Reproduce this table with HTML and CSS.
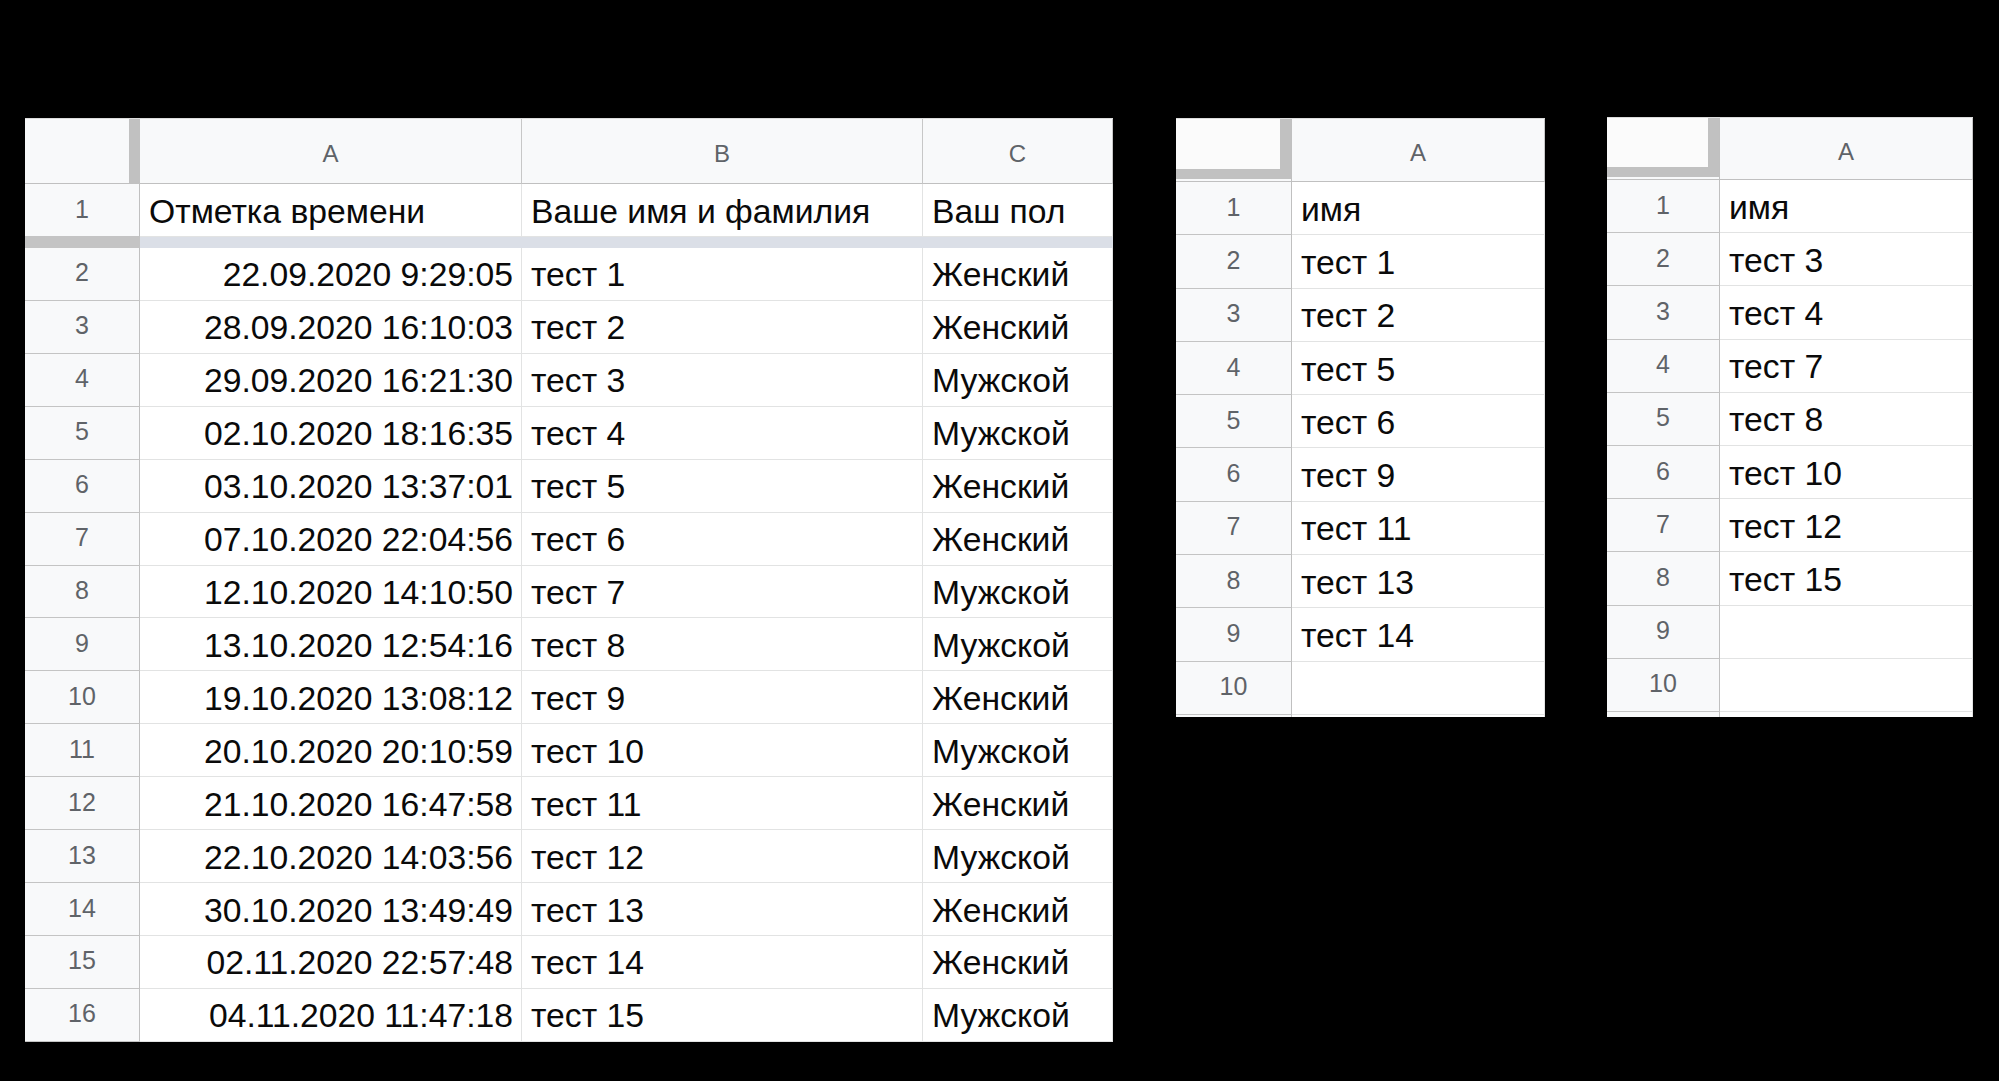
FILE: index.html
```html
<!DOCTYPE html>
<html lang="ru">
<head>
<meta charset="utf-8">
<title>Таблицы</title>
<link rel="stylesheet" href="styles.css">
</head>
<body>
<div class="page">
  <div class="sheet main">
    <div class="corner corner-main"></div>
    <div class="colh">A</div>
    <div class="colh">B</div>
    <div class="colh">C</div>

    <div class="rowh">1</div>
    <div class="cell">Отметка времени</div>
    <div class="cell">Ваше имя и фамилия</div>
    <div class="cell">Ваш пол</div>

    <div class="band-h"></div>
    <div class="band"></div>

    <div class="rowh">2</div><div class="cell num">22.09.2020 9:29:05</div><div class="cell">тест 1</div><div class="cell">Женский</div>
    <div class="rowh">3</div><div class="cell num">28.09.2020 16:10:03</div><div class="cell">тест 2</div><div class="cell">Женский</div>
    <div class="rowh">4</div><div class="cell num">29.09.2020 16:21:30</div><div class="cell">тест 3</div><div class="cell">Мужской</div>
    <div class="rowh">5</div><div class="cell num">02.10.2020 18:16:35</div><div class="cell">тест 4</div><div class="cell">Мужской</div>
    <div class="rowh">6</div><div class="cell num">03.10.2020 13:37:01</div><div class="cell">тест 5</div><div class="cell">Женский</div>
    <div class="rowh">7</div><div class="cell num">07.10.2020 22:04:56</div><div class="cell">тест 6</div><div class="cell">Женский</div>
    <div class="rowh">8</div><div class="cell num">12.10.2020 14:10:50</div><div class="cell">тест 7</div><div class="cell">Мужской</div>
    <div class="rowh">9</div><div class="cell num">13.10.2020 12:54:16</div><div class="cell">тест 8</div><div class="cell">Мужской</div>
    <div class="rowh">10</div><div class="cell num">19.10.2020 13:08:12</div><div class="cell">тест 9</div><div class="cell">Женский</div>
    <div class="rowh">11</div><div class="cell num">20.10.2020 20:10:59</div><div class="cell">тест 10</div><div class="cell">Мужской</div>
    <div class="rowh">12</div><div class="cell num">21.10.2020 16:47:58</div><div class="cell">тест 11</div><div class="cell">Женский</div>
    <div class="rowh">13</div><div class="cell num">22.10.2020 14:03:56</div><div class="cell">тест 12</div><div class="cell">Мужской</div>
    <div class="rowh">14</div><div class="cell num">30.10.2020 13:49:49</div><div class="cell">тест 13</div><div class="cell">Женский</div>
    <div class="rowh">15</div><div class="cell num">02.11.2020 22:57:48</div><div class="cell">тест 14</div><div class="cell">Женский</div>
    <div class="rowh">16</div><div class="cell num">04.11.2020 11:47:18</div><div class="cell">тест 15</div><div class="cell">Мужской</div>
  </div>

  <div class="sheet small mid">
    <div class="corner corner-small"><div class="bar"></div></div>
    <div class="colh">A</div>
    <div class="rowh">1</div><div class="cell">имя</div>
    <div class="rowh">2</div><div class="cell">тест 1</div>
    <div class="rowh">3</div><div class="cell">тест 2</div>
    <div class="rowh">4</div><div class="cell">тест 5</div>
    <div class="rowh">5</div><div class="cell">тест 6</div>
    <div class="rowh">6</div><div class="cell">тест 9</div>
    <div class="rowh">7</div><div class="cell">тест 11</div>
    <div class="rowh">8</div><div class="cell">тест 13</div>
    <div class="rowh">9</div><div class="cell">тест 14</div>
    <div class="rowh">10</div><div class="cell"></div>
    <div class="rowh tail"></div><div class="cell tail"></div>
  </div>

  <div class="sheet small right">
    <div class="corner corner-small"><div class="bar"></div></div>
    <div class="colh">A</div>
    <div class="rowh">1</div><div class="cell">имя</div>
    <div class="rowh">2</div><div class="cell">тест 3</div>
    <div class="rowh">3</div><div class="cell">тест 4</div>
    <div class="rowh">4</div><div class="cell">тест 7</div>
    <div class="rowh">5</div><div class="cell">тест 8</div>
    <div class="rowh">6</div><div class="cell">тест 10</div>
    <div class="rowh">7</div><div class="cell">тест 12</div>
    <div class="rowh">8</div><div class="cell">тест 15</div>
    <div class="rowh">9</div><div class="cell"></div>
    <div class="rowh">10</div><div class="cell"></div>
    <div class="rowh tail"></div><div class="cell tail"></div>
  </div>
</div>
</body>
</html>
```

FILE: styles.css
```css
* {
  box-sizing: border-box;
}

html, body {
  margin: 0;
  padding: 0;
  background: #000;
}

body {
  width: 1999px;
  height: 1081px;
  overflow: hidden;
  font-family: "Liberation Sans", Arial, "Noto Sans", sans-serif;
}

.page {
  display: flex;
  align-items: flex-start;
  padding: 118px 0 0 25px;
}

.sheet {
  display: grid;
  background: #fff;
  border-top: 1px solid #dcdcdc;
}

.main {
  grid-template-columns: 115px 382px 401px 190px;
  grid-template-rows: 65px 53px 11px repeat(15, 52.93px);
}

.small {
  grid-template-columns: 116px 253px;
}

.mid {
  margin-left: 63px;
  grid-template-rows: 63px repeat(10, 53.3px) 2px;
}

.right {
  margin-left: 62px;
  margin-top: -1px;
  grid-template-columns: 113px 253px;
  grid-template-rows: 62px repeat(10, 53.2px) 5px;
}

.colh {
  display: flex;
  align-items: center;
  justify-content: center;
  padding-top: 6px;
  background: #f8f9fa;
  color: #5f6368;
  font-size: 24px;
  border-right: 1px solid #c7c7c7;
  border-bottom: 1px solid #c0c0c0;
}

.corner {
  background: #f8f9fa;
  border-bottom: 1px solid #c0c0c0;
}

.corner-main {
  border-right: 11px solid #c1c1c1;
}

.corner-small {
  padding-bottom: 2px;
  border-right: 1px solid #c0c0c0;
}

.corner-small .bar {
  height: 100%;
  background: #fbfbfb;
  border-right: 11px solid #c1c1c1;
  border-bottom: 10px solid #c1c1c1;
}

.rowh {
  display: flex;
  align-items: center;
  justify-content: center;
  padding-bottom: 2px;
  background: #f8f9fa;
  color: #5f6368;
  font-size: 25px;
  border-right: 1px solid #c0c0c0;
  border-bottom: 1px solid #c4c4c4;
}

.cell {
  display: flex;
  align-items: center;
  padding: 2px 8px 0 9px;
  color: #0a0a0a;
  font-size: 33.7px;
  white-space: nowrap;
  overflow: hidden;
  border-right: 1px solid #e2e3e3;
  border-bottom: 1px solid #e2e3e3;
}

.cell.num {
  justify-content: flex-end;
}

.tail {
  border-bottom: none;
}

.band-h {
  background: #c4c4c4;
}

.band {
  grid-column: 2 / 5;
  background: #dbdfe7;
}
```
